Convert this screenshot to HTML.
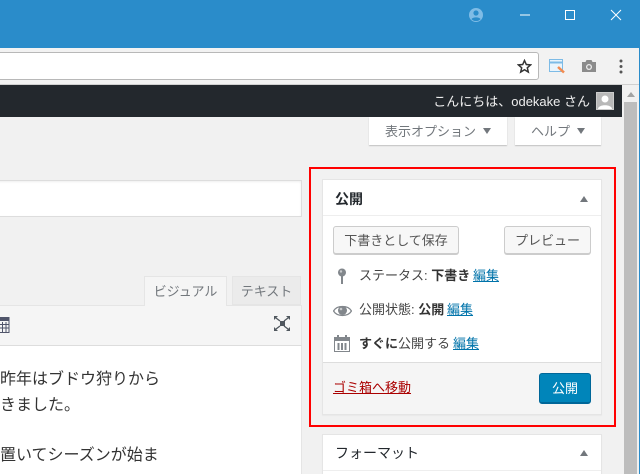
<!DOCTYPE html>
<html lang="ja"><head><meta charset="utf-8">
<style>
html,body{margin:0;padding:0;width:640px;height:474px;overflow:hidden;background:#f1f1f1}
body{position:relative;font-family:"Liberation Sans","Noto Sans CJK JP",sans-serif;font-size:13px;color:#444}
div,a,svg{position:absolute;box-sizing:border-box}
.t{white-space:nowrap;line-height:20px}
a{text-decoration:underline;color:#0073aa;white-space:nowrap;line-height:20px}
b{font-weight:700;color:#333}
.btn{background:#f7f7f7;border:1px solid #ccc;border-radius:3px;box-shadow:0 1px 0 #ccc;color:#555;text-align:center;line-height:28px;white-space:nowrap}
.top{background:#fff;box-shadow:0 1px 1px rgba(0,0,0,.2);color:#72777c;white-space:nowrap;line-height:30px}
.box{background:#fff;border:1px solid #e5e5e5;box-shadow:0 1px 1px rgba(0,0,0,.04)}
.tri{width:0;height:0;border-left:4px solid transparent;border-right:4px solid transparent}
</style></head><body>
<div style="left:0;top:0;width:640px;height:48px;background:#2a8cca"></div>
<svg style="left:468px;top:7px" width="16" height="16" viewBox="0 0 16 16"><circle cx="8" cy="8" r="7" fill="#7fbce6"/><circle cx="8" cy="6" r="2.600" fill="#2a8cca"/><path d="M3.500 12.200c1-2.400 8-2.400 9 0A6.500 6.500 0 0 1 3.500 12.200z" fill="#2a8cca"/></svg>
<svg style="left:515px;top:5px" width="125" height="20" viewBox="0 0 125 20"><path d="M5 10h10" stroke="#fff" fill="none"/><rect x="50.500" y="5.500" width="9" height="9" stroke="#fff" fill="none"/><path d="M96 5l10 10M106 5l-10 10" stroke="#fff" fill="none"/></svg>

<div style="left:0;top:48px;width:640px;height:37px;background:#f2f2f2;border-bottom:1px solid #d0d0d0"></div>
<div style="left:-4px;top:52px;width:543px;height:28px;background:#fff;border:1px solid #b8b8b8;border-radius:3px"></div>
<svg style="left:517px;top:59px" width="15" height="15" viewBox="0 0 15 15"><path d="M7.500 1.500l1.800 4 4.300.4-3.300 2.900 1 4.200-3.800-2.300-3.800 2.300 1-4.200L1.400 5.900l4.300-.4z" fill="none" stroke="#333" stroke-width="1.500"/></svg>
<svg style="left:549px;top:59px" width="17" height="15" viewBox="0 0 17 15"><rect x=".5" y=".5" width="13" height="12" fill="#eaf4fb" stroke="#7dbbe6"/><path d="M1 3.500h12" stroke="#7dbbe6" stroke-width="2"/><path d="M9 8l6 5.500" stroke="#f28b50" stroke-width="2.500"/></svg>
<svg style="left:581px;top:59px" width="16" height="14" viewBox="0 0 16 14"><path d="M1 3h3.500l1-2h5l1 2H15v10H1z" fill="#8c8c8c"/><circle cx="8" cy="8" r="3" fill="#eee"/><circle cx="8" cy="8" r="1.700" fill="#8c8c8c"/></svg>
<svg style="left:618px;top:59px" width="6" height="15" viewBox="0 0 6 15"><circle cx="3" cy="2" r="1.500" fill="#555"/><circle cx="3" cy="7.500" r="1.500" fill="#555"/><circle cx="3" cy="13" r="1.500" fill="#555"/></svg>

<div style="left:0;top:85px;width:622px;height:32px;background:#23282d"></div>
<div class="t" style="right:50px;top:92px;color:#eee;font-size:13px">こんにちは、odekake さん</div>
<div style="left:596px;top:92px;width:18px;height:18px;background:#b8b8b8;border:1px solid #ccc;overflow:hidden"><svg style="left:0;top:0" width="16" height="16" viewBox="0 0 16 16"><circle cx="8" cy="6" r="3.500" fill="#fff"/><path d="M1 16c0-5 14-5 14 0z" fill="#fff"/></svg></div>

<div style="left:622px;top:85px;width:18px;height:389px;background:#f1f1f1"></div>
<div class="tri" style="left:627px;top:92px;border-bottom:5px solid #a3a3a3"></div>
<div style="left:624px;top:102px;width:13px;height:372px;background:#bdbdbd"></div>
<div style="left:639px;top:48px;width:1px;height:426px;background:#2a8cca"></div>

<div class="top" style="left:369px;top:117px;width:138px;height:28px;padding-left:16px">表示オプション</div>
<div class="tri" style="left:483px;top:128px;border-top:6px solid #72777c"></div>
<div class="top" style="left:515px;top:117px;width:86px;height:28px;padding-left:16px">ヘルプ</div>
<div class="tri" style="left:577px;top:128px;border-top:6px solid #72777c"></div>

<div style="left:-4px;top:180px;width:306px;height:37px;background:#fff;border:1px solid #ddd;box-shadow:inset 0 1px 2px rgba(0,0,0,.07)"></div>

<div class="t" style="left:144px;top:276px;width:83px;height:30px;background:#f5f5f5;border:1px solid #e5e5e5;border-bottom:0;color:#72777c;line-height:29px;text-align:center;z-index:2">ビジュアル</div>
<div class="t" style="left:232px;top:276px;width:69px;height:29px;background:#ebebeb;border:1px solid #e5e5e5;color:#72777c;line-height:29px;text-align:center">テキスト</div>
<div style="left:-4px;top:305px;width:306px;height:41px;background:#f5f5f5;border:1px solid #e5e5e5;border-bottom:1px solid #ddd"></div>
<svg style="left:0;top:317px" width="10" height="16" viewBox="0 0 10 16"><path d="M-1 .5h10v15h-10" fill="none" stroke="#50556a"/><path d="M-1 1h10v3h-10z" fill="#50556a"/><path d="M-1 7.500h10M-1 11h10M2.500 5v10M6 5v10" fill="none" stroke="#50556a"/></svg>
<svg style="left:274px;top:316px" width="16" height="15" viewBox="0 0 16 15"><rect x="6" y="5" width="5" height="5" fill="#50575e"/><path d="M0 0h4L0 4zM16 0h-4l4 4zM0 15h4l-4-4zM16 15h-4l4-4z" fill="#50575e"/><path d="M2 2l4 3M14 2l-4 3M2 13l4-3M14 13l-4-3" stroke="#50575e" stroke-width="1.300"/></svg>
<div style="left:-4px;top:346px;width:306px;height:130px;background:#fff;border-right:1px solid #e5e5e5"></div>
<div class="t" style="left:0;top:370px;font-size:16px;color:#333">昨年はブドウ狩りから</div>
<div class="t" style="left:0;top:396px;font-size:16px;color:#333">きました。</div>
<div class="t" style="left:0;top:446px;font-size:16px;color:#333">置いてシーズンが始ま</div>

<div class="box" style="left:322px;top:179px;width:280px;height:236px"></div>
<div class="t" style="left:335px;top:189px;font-size:14px;font-weight:700;color:#23282d">公開</div>
<div class="tri" style="left:580px;top:196px;border-bottom:6px solid #72777c"></div>
<div style="left:323px;top:215px;width:278px;height:1px;background:#eee"></div>
<div class="btn" style="left:333px;top:226px;width:126px;height:28px">下書きとして保存</div>
<div class="btn" style="left:504px;top:226px;width:87px;height:28px">プレビュー</div>

<svg style="left:337px;top:268px" width="10" height="16" viewBox="0 0 10 16"><circle cx="5" cy="4.500" r="4" fill="#82878c"/><circle cx="4" cy="3.500" r="1.200" fill="#c8cacc"/><rect x="4" y="8" width="2" height="8" fill="#82878c"/></svg>
<div class="t" style="left:359px;top:266px">ステータス: <b>下書き</b></div>
<a style="left:473px;top:266px">編集</a>
<svg style="left:333px;top:304px" width="19" height="14" viewBox="0 0 19 14"><path d="M.5 7C4 1 15 1 18.500 7 15 13 4 13 .5 7z" fill="none" stroke="#82878c" stroke-width="1.300"/><circle cx="9.500" cy="6.500" r="4.500" fill="#82878c"/><circle cx="8" cy="5" r="1.300" fill="#c8cacc"/></svg>
<div class="t" style="left:359px;top:300px">公開状態: <b>公開</b></div>
<a style="left:447px;top:300px">編集</a>
<svg style="left:334px;top:335px" width="17" height="17" viewBox="0 0 17 17"><path d="M.5 2.500h15v14H.5z" fill="none" stroke="#82878c"/><path d="M1 2h14v4H1z" fill="#82878c"/><path d="M4 0v3M12 0v3" stroke="#82878c" stroke-width="2"/><path d="M4.500 8v7M8 8v7M11.500 8v7" stroke="#82878c" stroke-width="2"/></svg>
<div class="t" style="left:359px;top:334px;color:#444"><b>すぐに</b>公開する</div>
<a style="left:453px;top:334px">編集</a>

<div style="left:323px;top:362px;width:278px;height:52px;background:#f5f5f5;border-top:1px solid #ddd"></div>
<a style="left:333px;top:378px;color:#a00">ゴミ箱へ移動</a>
<div style="left:539px;top:373px;width:52px;height:31px;background:#0085ba;border:1px solid #006799;border-bottom:2px solid #006799;border-radius:3px;color:#fff;text-align:center;line-height:30px;white-space:nowrap">公開</div>

<div class="box" style="left:322px;top:434px;width:280px;height:50px"></div>
<div class="t" style="left:335px;top:443px;font-size:14px;color:#23282d">フォーマット</div>
<div class="tri" style="left:580px;top:450px;border-bottom:6px solid #72777c"></div>
<div style="left:323px;top:470px;width:278px;height:1px;background:#eee"></div>

<div style="left:309px;top:167px;width:307px;height:260px;border:2px solid #f00"></div>
</body></html>
